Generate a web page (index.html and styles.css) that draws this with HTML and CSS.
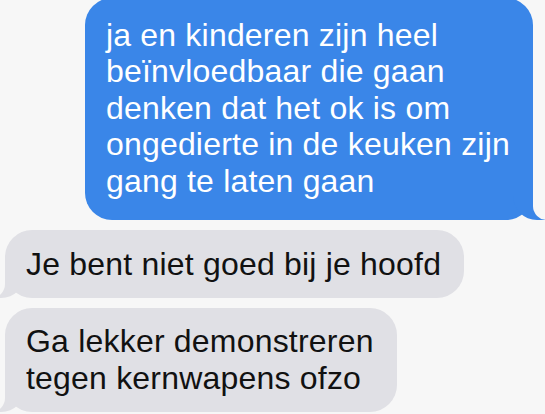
FILE: index.html
```html
<!DOCTYPE html>
<html lang="nl">
<head>
    <meta charset="UTF-8">
    <meta name="viewport" content="width=device-width, initial-scale=1.0">
    <title>Berichten</title>
    <link rel="stylesheet" href="styles.css">
</head>
<body>
    <div class="thread">
        <div class="bubble sent">ja en kinderen zijn heel<br>beïnvloedbaar die gaan<br>denken dat het ok is om<br>ongedierte in de keuken zijn<br>gang te laten gaan</div>
        <div class="bubble received">Je bent niet goed bij je hoofd</div>
        <div class="bubble received">Ga lekker demonstreren<br>tegen kernwapens ofzo</div>
    </div>
</body>
</html>
```

FILE: styles.css
```css
body {
    margin: 0;
    padding: 0;
    background-color: #f7f7f7;
    font-family: "Liberation Sans", Arial, sans-serif;
    overflow: hidden;
}
.thread {
    display: flex;
    flex-direction: column;
    gap: 10px;
    margin-top: -2px;
    padding: 0 12px 0 5px;
}
.bubble {
    position: relative;
    font-size: 32px;
    letter-spacing: 0.2px;
    line-height: 36.6px;
    padding: 18.6px 23px 20.4px 21px;
    border-radius: 27px;
}
.sent {
    align-self: flex-end;
    background-color: #3a86e8;
    color: #fff;
}
.received {
    align-self: flex-start;
    background-color: #e0e0e5;
    color: #111;
    padding-top: 15.6px;
    padding-bottom: 15.6px;
}

/* bubble tails */
.bubble::before,
.bubble::after {
    content: "";
    position: absolute;
    bottom: 0;
    height: 30px;
}
.sent::before {
    right: -12px;
    width: 32px;
    background-color: #3a86e8;
    border-bottom-left-radius: 24px;
}
.sent::after {
    right: -18px;
    width: 18px;
    background-color: #f7f7f7;
    border-bottom-left-radius: 14px;
}
.received::before {
    left: -12px;
    width: 32px;
    background-color: #e0e0e5;
    border-bottom-right-radius: 24px;
}
.received::after {
    left: -18px;
    width: 18px;
    background-color: #f7f7f7;
    border-bottom-right-radius: 14px;
}
```
